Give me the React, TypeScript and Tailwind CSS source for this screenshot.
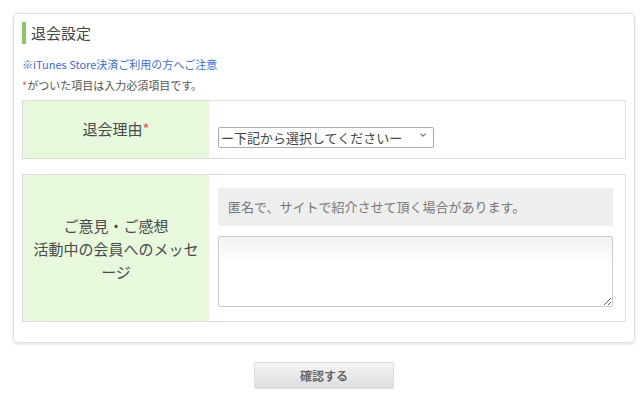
import { ChevronDown } from "lucide-react";

const rows = [
  { label: "ご意見・ご感想 活動中の会員へのメッセージ" },
];

export default function App() {
  return (
    <div className="min-h-[395px] w-[640px] bg-white font-['Noto_Sans_CJK_JP','Noto_Sans',sans-serif] text-[#333]">
      <div className="pt-[13px] pl-[13px]">
        <div className="w-[622px] rounded-[4px] border border-[#e0e0e0] bg-white px-[8px] pt-[8px] pb-[20px] shadow-[0_1px_3px_rgba(0,0,0,0.12)]">
          <div className="flex h-[22px] items-center">
            <span className="h-[22px] w-[4px] bg-[#8bc866]" />
            <h2 className="ml-[5px] text-[15px] leading-[22px] text-[#444]">退会設定</h2>
          </div>

          <div className="mt-[10px] text-[11px] leading-[21px]">
            <a className="text-[#3a6ed0]">※iTunes Store決済ご利用の方へご注意</a>
          </div>
          <p className="text-[11px] leading-[21px] text-[#555]">
            <span className="text-[#e55]">*</span>がついた項目は入力必須項目です。
          </p>

          <div className="mt-[4px] flex h-[59px] border border-[#dddddd]">
            <div className="flex w-[186px] shrink-0 items-center justify-center bg-[#e7f8dd] text-[15px] text-[#4a4a4a]">
              退会理由<span className="text-[#e55]">*</span>
            </div>
            <div className="pl-[9px] pt-[23px]">
              <div className="relative h-[21px] w-[216px]">
                <select className="h-[21px] w-[216px] appearance-none rounded-[2px] border border-[#aaa] bg-white pl-[2px] text-[13px] leading-[19px] text-[#444]">
                  <option>ー下記から選択してくださいー</option>
                </select>
                <ChevronDown className="pointer-events-none absolute right-[6px] top-[6px] h-[10px] w-[10px] text-[#555]" strokeWidth={2.5} />
              </div>
            </div>
          </div>

          {rows.map((r) => (
            <div key={r.label} className="mt-[15px] flex h-[148px] border border-[#dddddd]">
              <div className="flex w-[186px] shrink-0 items-center justify-center bg-[#e7f8dd] px-[8px] text-center text-[15px] leading-[23px] text-[#4a4a4a]">
                <p>
                  ご意見・ご感想
                  <br />
                  活動中の会員へのメッセージ
                </p>
              </div>
              <div className="flex-1 pl-[9px] pr-[12px] pt-[13px]">
                <div className="flex h-[38px] items-center bg-[#eeeeee] px-[10px] text-[13px] text-[#777]">
                  匿名で、サイトで紹介させて頂く場合があります。
                </div>
                <textarea className="mt-[10px] block h-[71px] w-full rounded-[2px] border border-[#cccccc] bg-gradient-to-b from-[#f2f2f2] to-white to-40%" />
              </div>
            </div>
          ))}
        </div>

        <div className="flex w-[622px] justify-center pt-[19px]">
          <button className="h-[27px] w-[140px] rounded-[2px] border border-[#dcdcdc] bg-gradient-to-b from-[#f5f5f5] to-[#dedede] text-[12px] font-bold text-[#666]">
            確認する
          </button>
        </div>
      </div>
    </div>
  );
}
